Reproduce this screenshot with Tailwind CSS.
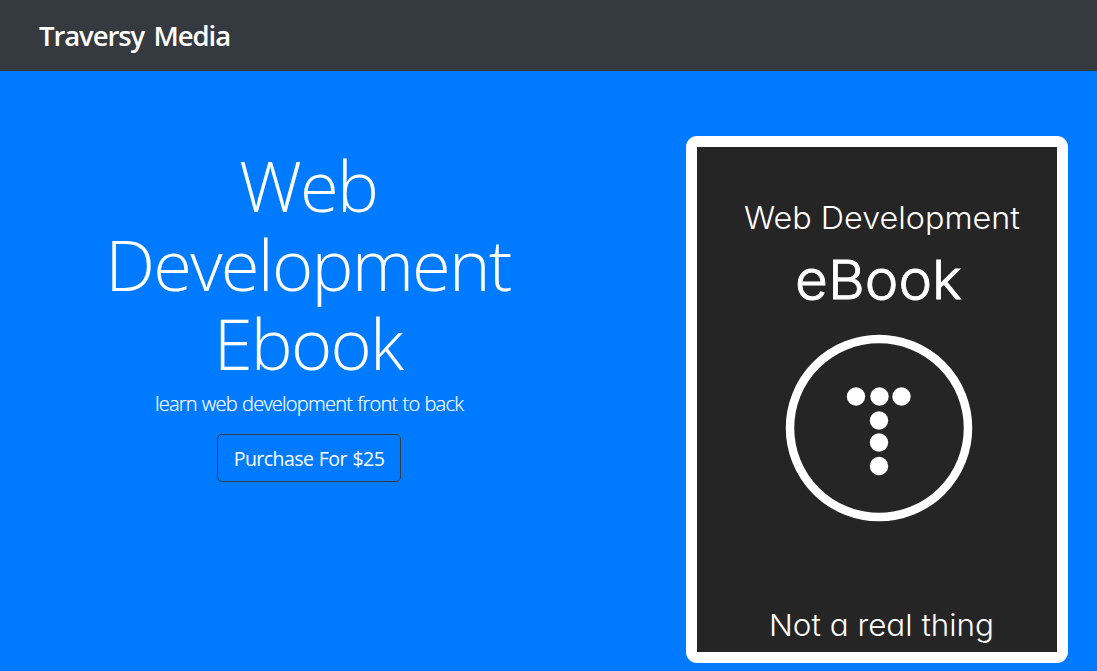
<!DOCTYPE html>
<html lang="en">
<head>
<meta charset="utf-8">
<title>Traversy Media</title>
<script src="https://cdn.jsdelivr.net/npm/@tailwindcss/browser@4"></script>
</head>
<body class="h-[671px] overflow-hidden bg-[#007bff] font-['Open_Sans','Noto_Sans',sans-serif] text-white">
<nav class="flex h-[71px] items-center bg-[#343a40] pl-[39px]">
  <a class="text-[27.5px] leading-[42px] font-semibold tracking-[-1.1px] [word-spacing:3.5px]">Traversy Media</a>
</nav>
<main class="flex h-[600px] items-start justify-between pr-[29px] pl-[59px]">
  <section class="flex w-[500px] flex-col items-center pt-[75px] text-center">
    <h1 class="mr-[2px] text-[70.5px] leading-[79px] font-light tracking-[-1.8px]">Web<br>Development<br>Ebook</h1>
    <p class="mt-[6px] text-[20px] leading-[30px] font-light tracking-[-0.75px] [word-spacing:0.6px] [-webkit-text-stroke:0.2px_white]">learn web development front to back</p>
    <button class="mt-[15px] h-[48px] w-[184px] rounded-[5px] border border-[#343a40] pt-[2px] text-[19.5px] leading-[30px] tracking-[-0.55px] [word-spacing:1px] whitespace-nowrap">Purchase For $25</button>
  </section>
  <div class="mt-[65px] h-[527px] w-[382px] rounded-[11px] bg-white p-[11px]">
    <svg class="block h-[505px] w-[360px] bg-[#252525]" viewBox="697 147 360 505" fill="#fff">
      <g class="font-['Inter',sans-serif] [font-feature-settings:'cv11'] font-light">
        <text x="744" y="228.500" font-size="31" textLength="276" lengthAdjust="spacingAndGlyphs">Web Development</text>
        <text x="795" y="298.500" font-size="54" textLength="167" lengthAdjust="spacingAndGlyphs" stroke="#fff" stroke-width="0.800">eBook</text>
        <text x="769" y="635.500" font-size="30" textLength="225" lengthAdjust="spacingAndGlyphs">Not a real thing</text>
      </g>
      <circle cx="879" cy="428" r="89" fill="none" stroke="#fff" stroke-width="8.500"/>
      <circle cx="856" cy="396.500" r="9.200"/>
      <circle cx="879.500" cy="396.500" r="9.200"/>
      <circle cx="901.500" cy="396.500" r="9.200"/>
      <circle cx="879" cy="420.500" r="9.200"/>
      <circle cx="879" cy="442.500" r="9.200"/>
      <circle cx="879" cy="466" r="9.200"/>
    </svg>
  </div>
</main>
</body>
</html>
